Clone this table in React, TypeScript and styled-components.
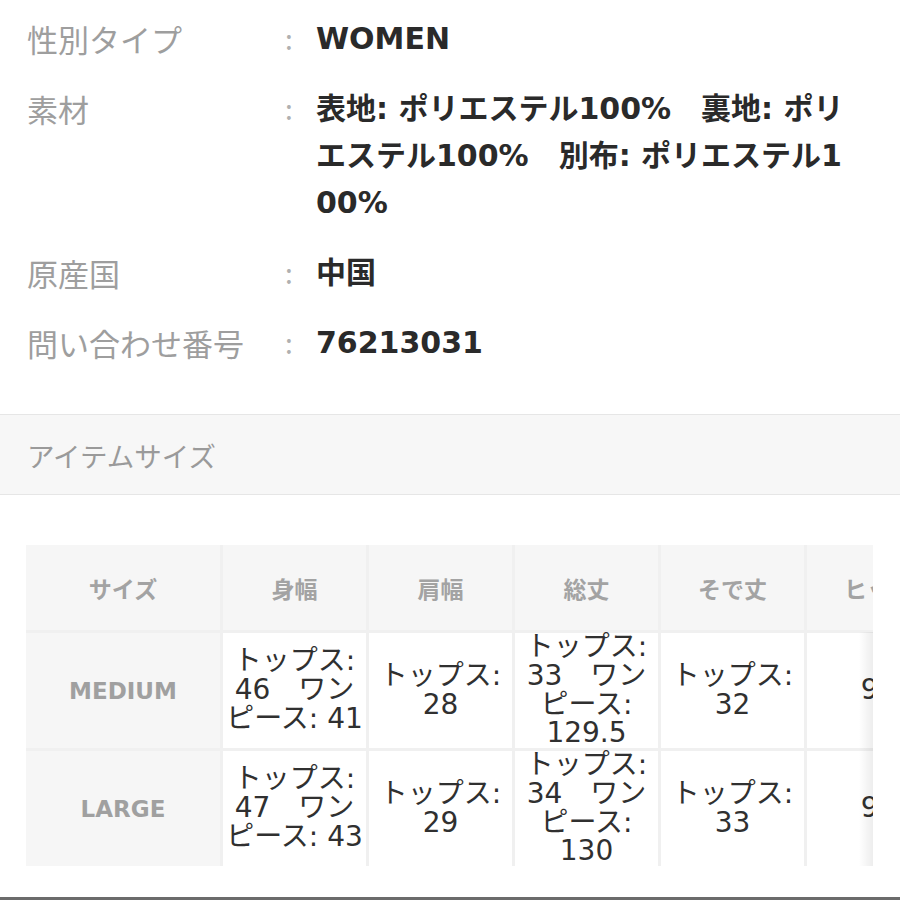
import React from "react";
import styled, { createGlobalStyle } from "styled-components";

const GlobalStyle = createGlobalStyle`
  html, body { margin: 0; padding: 0; background: #ffffff; }
  body { font-family: "Noto Sans CJK JP", sans-serif; }
`;

const Page = styled.div`
  width: 900px;
  height: 900px;
  overflow: hidden;
  display: flex;
  flex-direction: column;
  background: #fff;
`;

const SpecList = styled.dl`
  margin: 0;
  padding: 15px 0 48px 27px;
  display: flex;
  flex-direction: column;
  gap: 23px;
`;

const SpecRow = styled.div`
  display: grid;
  grid-template-columns: 258px 31px 542px;
  line-height: 47px;
`;

const SpecLabel = styled.dt`
  margin: 0;
  font-family: "Noto Sans CJK JP", sans-serif;
  font-size: 31px;
  font-weight: 400;
  color: #9e9e9e;
  white-space: nowrap;
`;

const Colon = styled.span`
  font-family: "Noto Sans CJK JP", sans-serif;
  font-size: 28px;
  color: #b0b0b0;
`;

const SpecValue = styled.dd`
  margin: 0;
  font-family: "DejaVu Sans", "Noto Sans CJK JP", sans-serif;
  font-size: 30px;
  font-weight: 700;
  color: #2a2a2a;
  word-break: break-all;
`;

const SectionBand = styled.div`
  border-top: 1px solid #e6e6e6;
  border-bottom: 1px solid #e6e6e6;
  background: #f7f7f7;
  height: 79px;
  display: flex;
  align-items: center;
  padding-left: 27px;
`;

const SectionTitle = styled.h2`
  margin: 0;
  font-family: "Noto Sans CJK JP", sans-serif;
  font-size: 27.5px;
  font-weight: 400;
  color: #9a9a9a;
`;

const TableScroll = styled.div`
  position: relative;
  margin: 50px 27px 0 26px;
  overflow: hidden;
`;

const SizeGrid = styled.div`
  display: grid;
  grid-template-columns: 194px repeat(5, 143px);
  grid-auto-rows: auto;
  gap: 3px;
  width: max-content;
  background: #f0f0f0;
`;

const HeadCell = styled.div`
  height: 85px;
  background: #f6f6f6;
  display: flex;
  align-items: center;
  justify-content: center;
  font-family: "Noto Sans CJK JP", sans-serif;
  font-size: 23px;
  font-weight: 700;
  color: #a3a3a3;
  white-space: nowrap;
`;

const SizeName = styled.div`
  background: #f6f6f6;
  display: flex;
  align-items: center;
  justify-content: center;
  font-family: "DejaVu Sans", "Noto Sans CJK JP", sans-serif;
  font-size: 23px;
  font-weight: 700;
  color: #a0a0a0;
`;

const DataCell = styled.div`
  background: #ffffff;
  min-height: 115px;
  display: flex;
  align-items: center;
  justify-content: center;
  text-align: center;
  font-family: "DejaVu Sans", "Noto Sans CJK JP", sans-serif;
  font-size: 28px;
  font-weight: 400;
  line-height: 28.75px;
  color: #303030;
`;

const ScrollShade = styled.div`
  position: absolute;
  top: 87px;
  right: 0;
  bottom: 0;
  width: 14px;
  background: linear-gradient(to right, rgba(0, 0, 0, 0), rgba(0, 0, 0, 0.07));
  pointer-events: none;
`;

const Spacer = styled.div`
  flex: 1;
`;

const BottomRule = styled.div`
  height: 3px;
  background: #6b6b6b;
`;

const specs: { label: string; value: string }[] = [
  { label: "性別タイプ", value: "WOMEN" },
  {
    label: "素材",
    value: "表地: ポリエステル100%　裏地: ポリエステル100%　別布: ポリエステル100%",
  },
  { label: "原産国", value: "中国" },
  { label: "問い合わせ番号", value: "76213031" },
];

const headers = ["サイズ", "身幅", "肩幅", "総丈", "そで丈", "ヒップ"];

const rows: { size: string; values: string[] }[] = [
  {
    size: "MEDIUM",
    values: [
      "トップス: 46　ワンピース: 41",
      "トップス: 28",
      "トップス: 33　ワンピース: 129.5",
      "トップス: 32",
      "96",
    ],
  },
  {
    size: "LARGE",
    values: [
      "トップス: 47　ワンピース: 43",
      "トップス: 29",
      "トップス: 34　ワンピース: 130",
      "トップス: 33",
      "98",
    ],
  },
];

export default function App() {
  return (
    <>
      <GlobalStyle />
      <Page>
        <SpecList>
          {specs.map((s) => (
            <SpecRow key={s.label}>
              <SpecLabel>{s.label}</SpecLabel>
              <Colon>:</Colon>
              <SpecValue>{s.value}</SpecValue>
            </SpecRow>
          ))}
        </SpecList>
        <SectionBand>
          <SectionTitle>アイテムサイズ</SectionTitle>
        </SectionBand>
        <TableScroll>
          <SizeGrid>
            {headers.map((h) => (
              <HeadCell key={h}>{h}</HeadCell>
            ))}
            {rows.map((r) => (
              <React.Fragment key={r.size}>
                <SizeName>{r.size}</SizeName>
                {r.values.map((v, i) => (
                  <DataCell key={i}>{v}</DataCell>
                ))}
              </React.Fragment>
            ))}
          </SizeGrid>
          <ScrollShade />
        </TableScroll>
        <Spacer />
        <BottomRule />
      </Page>
    </>
  );
}
